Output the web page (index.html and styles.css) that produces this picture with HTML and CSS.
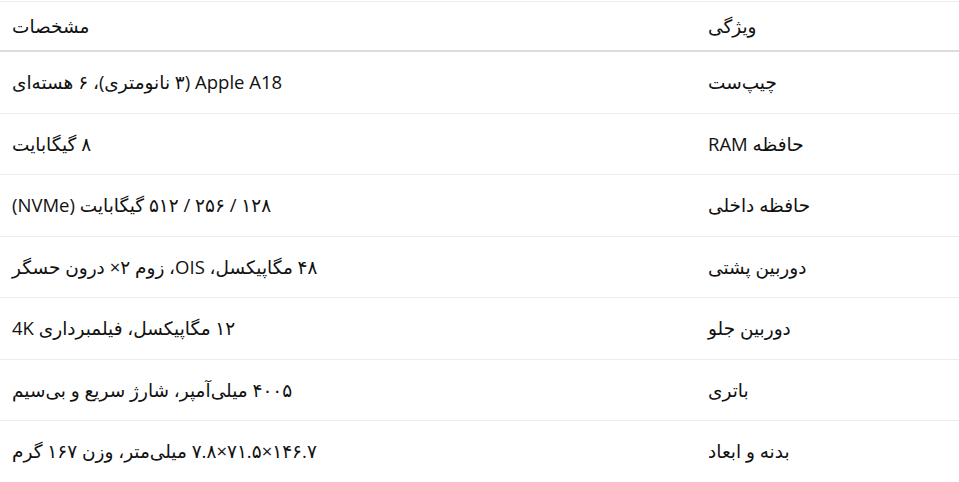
FILE: index.html
```html
<!DOCTYPE html>
<html lang="fa" dir="rtl">
<head>
<meta charset="utf-8">
<link rel="stylesheet" href="styles.css">
<title>مشخصات</title>
</head>
<body>
<table class="spec">
  <colgroup>
    <col class="col-feature">
    <col class="col-value">
  </colgroup>
  <thead>
    <tr><th>ویژگی</th><th>مشخصات</th></tr>
  </thead>
  <tbody>
    <tr><td>چیپ‌ست</td><td>Apple A18 (۳ نانومتری)، ۶ هسته‌ای</td></tr>
    <tr><td>حافظه RAM</td><td>۸ گیگابایت</td></tr>
    <tr><td>حافظه داخلی</td><td>۱۲۸ / ۲۵۶ / ۵۱۲ گیگابایت (NVMe)</td></tr>
    <tr><td>دوربین پشتی</td><td>۴۸ مگاپیکسل، OIS، زوم ۲× درون حسگر</td></tr>
    <tr><td>دوربین جلو</td><td>۱۲ مگاپیکسل، فیلمبرداری 4K</td></tr>
    <tr><td>باتری</td><td>۴۰۰۵ میلی‌آمپر، شارژ سریع و بی‌سیم</td></tr>
    <tr><td>بدنه و ابعاد</td><td>۱۴۶.۷×۷۱.۵×۷.۸ میلی‌متر، وزن ۱۶۷ گرم</td></tr>
  </tbody>
</table>
</body>
</html>
```
FILE: styles.css
```css
html, body {
  margin: 0;
  padding: 0;
  background: #ffffff;
}
body {
  padding-top: 1px;
  font-family: "Open Sans", "DejaVu Sans", sans-serif;
  font-size: 18.5px;
  color: #111111;
}
.spec {
  width: 959px;
  border-collapse: collapse;
  border-top: 1px solid #ececec;
}
.col-feature { width: 263px; }
.spec th, .spec td {
  text-align: left;
  font-weight: 400;
  padding: 18.25px 12px;
  line-height: 24px;
  border-bottom: 1px solid #ececec;
}
.spec th {
  padding-top: 12px;
  padding-bottom: 12px;
  border-bottom: 2px solid #dcdcdc;
}
```
